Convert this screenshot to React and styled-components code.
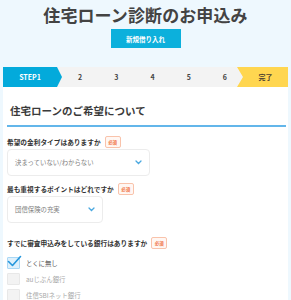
import styled, { createGlobalStyle } from "styled-components";

const GlobalStyle = createGlobalStyle`
    html, body {
        margin: 0;
        padding: 0;
        background: #eef8fe;
        font-family: "Noto Sans CJK JP", "Noto Sans", sans-serif;
    }
`;

const steps = ["2", "3", "4", "5", "6"];

const Chevron = () => (
    <svg width="7" height="5" viewBox="0 0 7 5">
        <path d="M1 1 L3.5 3.5 L6 1" fill="none" stroke="#4aa8e0" strokeWidth="1.3" strokeLinecap="round" />
    </svg>
);

const Check = () => (
    <svg width="15" height="13" viewBox="0 0 15 13">
        <path d="M1.5 6.5 L5.5 10.5 L13.5 1.5" fill="none" stroke="#2496dc" strokeWidth="1.6" strokeLinecap="round" strokeLinejoin="round" />
    </svg>
);

const Question = ({ label, width, value }) => (
    <>
        <LabelRow>
            <Label>{label}</Label>
            <Badge>必須</Badge>
        </LabelRow>
        <Select $width={width}>
            <SelectText>{value}</SelectText>
            <Chevron />
        </Select>
    </>
);

export default function App() {
    return (
        <>
            <GlobalStyle />
            <Header>
                <Title>住宅ローン診断のお申込み</Title>
                <NewButton>新規借り入れ</NewButton>
            </Header>
            <Card>
                <StepBar>
                    <StepCurrent>STEP1</StepCurrent>
                    <StepNumbers>
                        {steps.map(s => (
                            <StepNumber key={s}>{s}</StepNumber>
                        ))}
                    </StepNumbers>
                    <StepDone>完了</StepDone>
                </StepBar>
                <Section>
                    <Heading>住宅ローンのご希望について</Heading>
                    <Question label="希望の金利タイプはありますか" width={143} value="決まっていない/わからない" />
                    <Spacer $h={7} />
                    <Question label="最も重視するポイントはどれですか" width={96} value="団信保険の充実" />
                    <Spacer $h={14} />
                    <LabelRow>
                        <Label>すでに審査申込みをしている銀行はありますか</Label>
                        <Badge>必須</Badge>
                    </LabelRow>
                    <Checks>
                        <CheckRow>
                            <Box $checked>
                                <CheckMark><Check /></CheckMark>
                            </Box>
                            <CheckText $active>とくに無し</CheckText>
                        </CheckRow>
                        <CheckRow>
                            <Box />
                            <CheckText>auじぶん銀行</CheckText>
                        </CheckRow>
                        <CheckRow>
                            <Box />
                            <CheckText>住信SBIネット銀行</CheckText>
                        </CheckRow>
                    </Checks>
                </Section>
            </Card>
        </>
    );
}

const Header = styled.div`
    display: flex;
    flex-direction: column;
    align-items: center;
    padding-top: 5px;
    height: 62px;
`;
const Title = styled.h1`
    margin: 0;
    font-size: 17px;
    line-height: 20px;
    font-weight: 700;
    color: #434343;
    letter-spacing: 0.1px;
`;
const NewButton = styled.div`
    margin-top: 4px;
    width: 70px;
    height: 19px;
    background: #0cb0dc;
    color: #fff;
    font-size: 6.5px;
    font-weight: 700;
    display: flex;
    align-items: center;
    justify-content: center;
`;
const Card = styled.div`
    margin: 0 3px;
    background: #fff;
    min-height: 240px;
`;
const StepBar = styled.div`
    display: flex;
    height: 20px;
    background: #f3f3f3;
    font-size: 7px;
    font-weight: 700;
`;
const StepCurrent = styled.div`
    width: 59px;
    background: #03aadb;
    color: #fff;
    display: flex;
    align-items: center;
    justify-content: center;
    padding-right: 5px;
    box-sizing: border-box;
    clip-path: polygon(0 0, calc(100% - 5px) 0, 100% 50%, calc(100% - 5px) 100%, 0 100%);
`;
const StepNumbers = styled.div`
    flex: 1;
    display: flex;
`;
const StepNumber = styled.div`
    flex: 1;
    display: flex;
    align-items: center;
    justify-content: center;
    color: #444;
`;
const StepDone = styled.div`
    width: 51px;
    margin-left: -6px;
    background: #ffd650;
    color: #4a4030;
    display: flex;
    align-items: center;
    justify-content: center;
    padding-left: 6px;
    box-sizing: border-box;
    clip-path: polygon(0 0, 100% 0, 100% 100%, 0 100%, 6px 50%);
`;
const Section = styled.div`
    padding: 0 2px 0 4px;
`;
const Heading = styled.h2`
    margin: 17px 0 0;
    padding: 0 0 7px 3px;
    font-size: 10.5px;
    line-height: 14px;
    font-weight: 700;
    color: #3a3a3a;
    border-bottom: 2px solid #63b6ea;
    margin-bottom: 9px;
`;
const LabelRow = styled.div`
    display: flex;
    align-items: center;
    height: 12px;
`;
const Label = styled.span`
    font-size: 6.7px;
    font-weight: 700;
    color: #333;
`;
const Badge = styled.span`
    margin-left: 4px;
    width: 16px;
    height: 12px;
    box-sizing: border-box;
    border: 1px solid #f9c3ab;
    border-radius: 2px;
    background: #fff7f3;
    color: #f07345;
    font-size: 4.5px;
    font-weight: 700;
    display: flex;
    align-items: center;
    justify-content: center;
`;
const Select = styled.div`
    width: ${p => p.$width}px;
    height: 27px;
    box-sizing: border-box;
    margin-top: 1px;
    border: 1px solid #ececec;
    border-radius: 4px;
    display: flex;
    align-items: center;
    justify-content: space-between;
    padding: 0 7px 0 7px;
    background: #fff;
`;
const SelectText = styled.span`
    font-size: 6.4px;
    color: #808080;
`;
const Spacer = styled.div`
    height: ${p => p.$h}px;
`;
const Checks = styled.div`
    margin-top: 8px;
    display: flex;
    flex-direction: column;
    gap: 4px;
`;
const CheckRow = styled.div`
    display: flex;
    align-items: center;
    gap: 6px;
    height: 12px;
`;
const Box = styled.div`
    position: relative;
    width: 13px;
    height: 12px;
    box-sizing: border-box;
    border: 1px solid ${p => (p.$checked ? "#a9d7f5" : "#e8e8e8")};
    background: ${p => (p.$checked ? "#ddf0fc" : "#f3f3f3")};
    border-radius: 1px;
`;
const CheckMark = styled.span`
    position: absolute;
    left: -1px;
    top: -3px;
    line-height: 0;
`;
const CheckText = styled.span`
    font-size: 6.4px;
    color: ${p => (p.$active ? "#555" : "#a8a8a8")};
`;
